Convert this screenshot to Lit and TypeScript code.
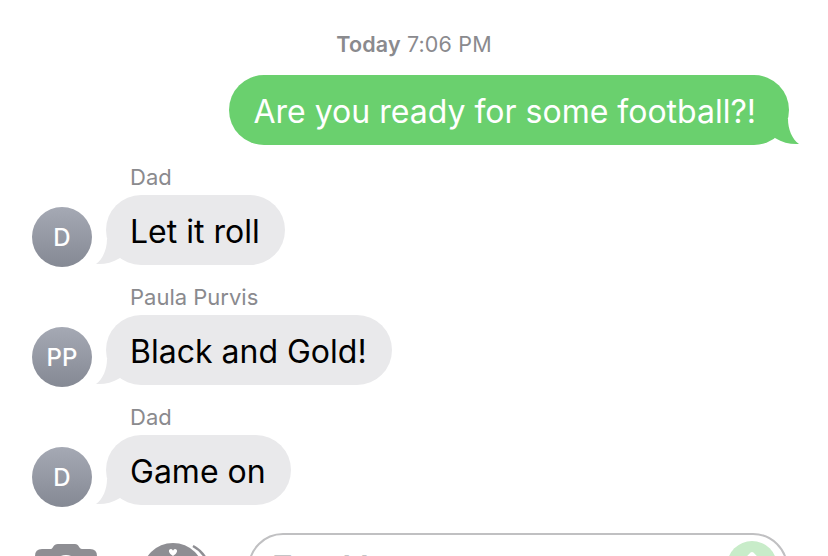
import { LitElement, css, html } from "lit";
import { customElement } from "lit/decorators.js";

type Message = { sender: string; initials: string; text: string };

const messages: Message[] = [
    { sender: "Dad", initials: "D", text: "Let it roll" },
    { sender: "Paula Purvis", initials: "PP", text: "Black and Gold!" },
    { sender: "Dad", initials: "D", text: "Game on" },
];

@customElement("app-root")
export class AppRoot extends LitElement {
    static styles = css`
        :host {
            display: block;
            width: 828px;
            height: 556px;
            overflow: hidden;
            background: #fff;
            font-family: Inter, "Liberation Sans", sans-serif;
        }
        .stamp {
            padding-top: 33px;
            height: 75px;
            box-sizing: border-box;
            text-align: center;
            font-size: 21.5px;
            line-height: 22px;
            color: #8a8a8e;
            letter-spacing: 0.15px;
        }
        .stamp b {
            font-weight: 600;
        }
        .sent-row {
            display: flex;
            justify-content: flex-end;
            padding-right: 39px;
        }
        .bubble {
            position: relative;
            height: 70px;
            border-radius: 35px;
            display: flex;
            align-items: center;
            font-size: 32px;
            box-sizing: border-box;
        }
        .bubble svg {
            position: absolute;
            bottom: 0;
        }
        .sent {
            background: #6ad06e;
            color: #fff;
            padding: 2px 33px 0 25px;
        }
        .sent svg {
            right: -10px;
            transform: scaleX(-1);
        }
        .received {
            background: #e9e9eb;
            color: #000;
            padding: 2px 25.5px 0 24px;
        }
        .received svg {
            left: -10px;
        }
        .thread {
            display: flex;
            flex-direction: column;
            gap: 20px;
            padding-top: 20px;
        }
        .message {
            display: grid;
            grid-template-columns: 60px auto;
            justify-content: start;
            column-gap: 14px;
            padding-left: 32px;
        }
        .sender {
            grid-column: 2;
            padding-left: 24px;
            height: 30px;
            font-size: 22px;
            line-height: 24px;
            color: #8a8a8e;
        }
        .avatar {
            grid-column: 1;
            align-self: end;
            width: 60px;
            height: 60px;
            margin-bottom: -2px;
            border-radius: 50%;
            background: linear-gradient(#a5a9b4, #858994);
            color: #fff;
            font-size: 24px;
            font-weight: 500;
            display: flex;
            align-items: center;
            justify-content: center;
        }
        .composer {
            display: flex;
            align-items: flex-start;
            padding: 28px 40px 0 35px;
        }
        .tool {
            display: block;
            flex: none;
        }
        .camera {
            margin-top: 11px;
            margin-right: 46px;
        }
        .apps {
            margin-top: 10px;
            margin-right: 37px;
        }
        .field {
            flex: 1;
            position: relative;
            height: 70px;
            box-sizing: border-box;
            border: 2px solid #c0c0c2;
            border-radius: 35px;
            padding: 13px 23px;
            font-size: 30px;
            color: #c4c4c6;
        }
        .send {
            position: absolute;
            right: 9px;
            top: 6px;
            display: block;
        }
    `;

    tail(colour: string) {
        return html`<svg width="24" height="26" viewBox="0 0 24 26">
            <path d="M11 0 C11 10 7 20 0 25 C8 25.5 16 24 24 19 L24 0 Z" fill=${colour}></path>
        </svg>`;
    }

    render() {
        return html`
            <div class="stamp"><b>Today</b> 7:06 PM</div>
            <div class="sent-row">
                <div class="bubble sent">Are you ready for some football?!${this.tail("#6ad06e")}</div>
            </div>
            <div class="thread">
                ${messages.map(
                    (m) => html`<div class="message">
                        <div class="sender">${m.sender}</div>
                        <div class="avatar">${m.initials}</div>
                        <div class="bubble received">${m.text}${this.tail("#e9e9eb")}</div>
                    </div>`
                )}
            </div>
            <div class="composer">
                <svg class="tool camera" width="62" height="46" viewBox="0 0 62 46">
                    <path d="M7 5 H16 C18 5 18 0 23 0 H40 C44 0 44 5 47 5 H55 Q62 5 62 12 V46 H0 V12 Q0 5 7 5 Z" fill="#8e8e93"></path>
                    <circle cx="31" cy="24" r="13" fill="#fff"></circle>
                    <circle cx="31" cy="24" r="9" fill="#8e8e93"></circle>
                </svg>
                <svg class="tool apps" width="68" height="46" viewBox="0 0 68 46">
                    <circle cx="30" cy="31" r="31" fill="#8e8e93"></circle>
                    <path d="M50 3 A31 31 0 0 1 66 26" fill="none" stroke="#8e8e93" stroke-width="2.5"></path>
                    <path d="M30 13 C25 10 25 6 28 6 C29 6 30 7 30 8 C30 7 31 6 32 6 C35 6 35 10 30 13 Z" fill="#fff"></path>
                </svg>
                <div class="field">
                    Text Message
                    <svg class="send" width="50" height="50" viewBox="0 0 50 50">
                        <circle cx="25" cy="25" r="25" fill="#c8ecc9"></circle>
                        <path d="M25 13 L34 22 M25 13 L16 22 M25 13 V40" fill="none" stroke="#fff" stroke-width="4" stroke-linecap="round"></path>
                    </svg>
                </div>
            </div>
        `;
    }
}
